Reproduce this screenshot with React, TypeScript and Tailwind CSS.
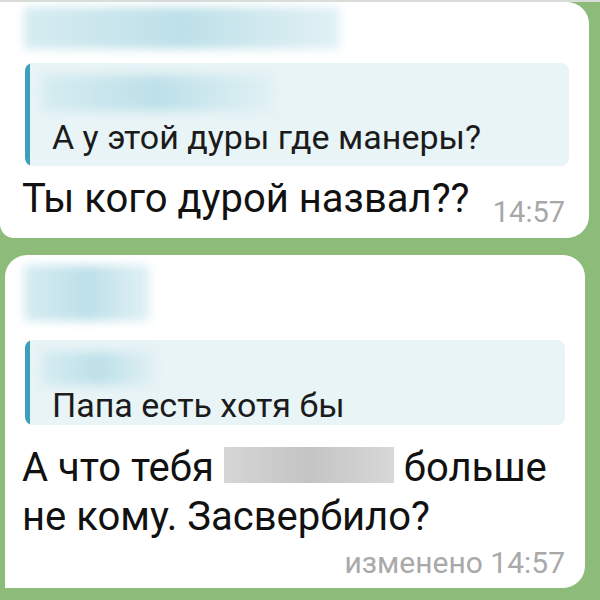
import React from 'react'

const font = { fontFamily: 'Roboto, "Noto Sans", sans-serif' }

function Smudge({ className }: { className: string }) {
  // soft blurred strip standing in for a hidden name
  return (
    <div className={`relative ${className}`}>
      <div className="absolute inset-[2px] bg-gradient-to-r from-[#d6ecf1] via-[#bde0e9] to-[#e2f1f4] blur-[5px]" />
    </div>
  )
}

function Quote({
  text,
  height,
  smudge,
  textTop,
}: {
  text: string
  height: string
  smudge: string
  textTop: string
}) {
  return (
    <div className={`flex bg-[#e8f4f6] rounded-[8px] overflow-hidden ${height}`}>
      <div className="w-[5px] bg-[#3f9fba] rounded-l-[8px]" />
      <div className="flex flex-col pl-[10px] pt-[10px]">
        <Smudge className={smudge} />
        <div className={`pl-[12px] text-[34px] leading-[36px] text-[#1b1b1b] whitespace-nowrap ${textTop}`}>{text}</div>
      </div>
    </div>
  )
}

export default function App() {
  return (
    <div className="w-[600px] h-[600px] bg-[#8cbb7a] flex flex-col overflow-hidden" style={font}>
      <div className="h-[2px] bg-[#d9ddd7] shrink-0" />

      <div className="h-[236px] shrink-0 mr-[11px] bg-white rounded-tr-[22px] rounded-br-[22px] rounded-bl-[14px] flex flex-col">
        <Smudge className="ml-[22px] mt-[3px] h-[46px] w-[320px]" />
        <div className="ml-[25px] mr-[20px] mt-[12px]">
          <Quote
            text="А у этой дуры где манеры?"
            height="h-[103px]"
            smudge="h-[40px] w-[236px]"
            textTop="mt-[6px]"
          />
        </div>
        <div className="flex items-start ml-[22px] mr-[24px] mt-[11px]">
          <span className="text-[40px] leading-[44px] text-[#111]">Ты кого дурой назвал??</span>
          <span className="ml-auto mt-[20px] text-[29px] leading-[30px] text-[#a7a7a7]">14:57</span>
        </div>
      </div>

      <div className="h-[333px] shrink-0 mt-[17px] ml-[5px] mr-[15px] bg-white rounded-[22px] rounded-bl-none flex flex-col">
        <Smudge className="ml-[17px] mt-[8px] h-[60px] w-[130px]" />
        <div className="ml-[20px] mr-[20px] mt-[17px]">
          <Quote text="Папа есть хотя бы" height="h-[85px]" smudge="h-[37px] w-[118px]" textTop="mt-[0px]" />
        </div>
        <div className="ml-[17px] mt-[18px] text-[40px] leading-[49px] text-[#111] whitespace-nowrap">
          А что тебя{' '}
          <span className="inline-block align-[-2px] w-[170px] h-[36px] bg-gradient-to-r from-[#d6d6d6] via-[#c4c4c4] to-[#d8d8d8]" />{' '}
          больше
          <br />
          не кому. Засвербило?
        </div>
        <div className="mt-auto mb-[10px] mr-[20px] text-right text-[30px] leading-[30px] text-[#a9a9a9]">
          изменено 14:57
        </div>
      </div>
    </div>
  )
}
